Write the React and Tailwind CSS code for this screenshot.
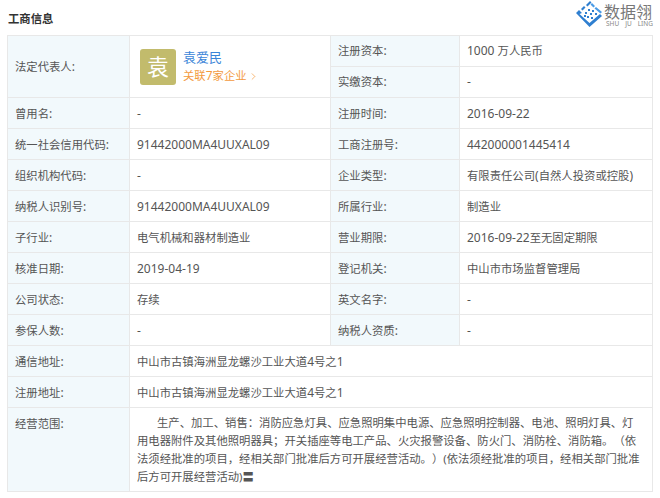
import React from "react";
import { ChevronRight } from "lucide-react";

const rows = [
  ["曾用名:", "-", "注册时间:", "2016-09-22"],
  ["统一社会信用代码:", "91442000MA4UUXAL09", "工商注册号:", "442000001445414"],
  ["组织机构代码:", "-", "企业类型:", "有限责任公司(自然人投资或控股)"],
  ["纳税人识别号:", "91442000MA4UUXAL09", "所属行业:", "制造业"],
  ["子行业:", "电气机械和器材制造业", "营业期限:", "2016-09-22至无固定期限"],
  ["核准日期:", "2019-04-19", "登记机关:", "中山市市场监督管理局"],
  ["公司状态:", "存续", "英文名字:", "-"],
  ["参保人数:", "-", "纳税人资质:", "-"],
];

const label = "bg-[#f2f9fc] border border-[#e8e8e8] pl-[7px] text-left font-normal text-[#555] h-[31px]";
const cell = "bg-white border border-[#e8e8e8] pl-[7px] text-[#555] h-[31px]";

// the chinese glyphs sit a bit narrower than the digits in the picture
const T = ({ children }) =>
  children.split(/([^\x00-\x7f]+)/).map((part, i) =>
    i % 2 ? (
      <span key={i} className="text-[11.35px]">
        {part}
      </span>
    ) : (
      part
    )
  );

const Logo = () => (
  <svg width="27" height="26" viewBox="0 0 27 26" className="shrink-0">
    <path d="M0 12 L3 9 L6 12 L3.5 13 L13.5 22 L24 13 L26 15 L13.5 26 Z" fill="#2f7fd0" />
    <path d="M5 8 L8 5 L9.5 6.5 L6.5 9.5 Z M10 4 L14 0 L15.5 1.5 L11.5 5.5 Z" fill="#2f7fd0" />
    <path d="M16 2 L19 5 L17.5 6.5 L14.5 3.5 Z M20 6 L26 11 L24.5 12.5 L18.5 7.5 Z" fill="#4a9be6" />
    <path d="M9 11 h2 v2 h-2 Z M12 8 h2 v2 h-2 Z M14 12 h2 v2 h-2 Z M11 15 h2 v2 h-2 Z M16 9 h2 v2 h-2 Z M8 14 h2 v2 h-2 Z M15 16 h2 v2 h-2 Z M19 12 h2 v2 h-2 Z" fill="#2f7fd0" />
  </svg>
);

export default function App() {
  return (
    <div className="w-[660px] h-[498px] bg-white overflow-hidden text-[12px] font-['Noto_Sans','Noto_Sans_CJK_SC',sans-serif]">
      <div className="h-[35px] flex justify-between pl-[8px] pr-[7px]">
        <h3 className="pt-[10px] text-[11.35px] leading-[18px] font-semibold text-[#333]">工商信息</h3>
        <div className="flex items-start gap-[1px] pt-[1px]">
          <Logo />
          <div className="w-[49px] pt-[3px]">
            <div className="text-[16px] leading-[16px] text-[#777] whitespace-nowrap">数据翎</div>
            <div className="text-[6.5px] leading-[7px] text-[#888] flex justify-between pl-[2px]"><span>SHU</span><span>JU</span><span>LING</span></div>
          </div>
        </div>
      </div>
      <table className="ml-[7px] w-[645px] table-fixed border-collapse">
        <colgroup>
          <col className="w-[122px]" />
          <col className="w-[201px]" />
          <col className="w-[129px]" />
          <col className="w-[193px]" />
        </colgroup>
        <tbody>
          <tr>
            <th rowSpan={2} className={label}><T>法定代表人:</T></th>
            <td rowSpan={2} className={cell + " pl-[10px]"}>
              <div className="flex items-center gap-[7px]">
                <div className="w-[36px] h-[36px] rounded-[3px] bg-[#c2bb6c] text-white text-[22px] flex items-center justify-center">袁</div>
                <div>
                  <div className="text-[#3b85d8] text-[13px] leading-[19px]">袁爱民</div>
                  <div className="text-[#f39a3e] leading-[18px] flex items-center"><T>关联7家企业</T><ChevronRight size={11} strokeWidth={1.5} className="ml-[1px]" /></div>
                </div>
              </div>
            </td>
            <th className={label}><T>注册资本:</T></th>
            <td className={cell}><T>1000 万人民币</T></td>
          </tr>
          <tr>
            <th className={label}><T>实缴资本:</T></th>
            <td className={cell}>-</td>
          </tr>
          {rows.map((r) => (
            <tr key={r[0]}>
              <th className={label + " pt-[1px]"}><T>{r[0]}</T></th>
              <td className={cell + " pt-[1px]"}><T>{r[1]}</T></td>
              <th className={label + " pt-[1px]"}><T>{r[2]}</T></th>
              <td className={cell + " pt-[1px]"}><T>{r[3]}</T></td>
            </tr>
          ))}
          <tr>
            <th className={label + " pt-[1px]"}><T>通信地址:</T></th>
            <td colSpan={3} className={cell + " pt-[1px]"}><T>中山市古镇海洲显龙螺沙工业大道4号之1</T></td>
          </tr>
          <tr>
            <th className={label + " pt-[1px]"}><T>注册地址:</T></th>
            <td colSpan={3} className={cell + " pt-[1px]"}><T>中山市古镇海洲显龙螺沙工业大道4号之1</T></td>
          </tr>
          <tr>
            <th className={label + " align-top pt-[7px]"}><T>经营范围:</T></th>
            <td colSpan={3} className={cell + " align-top pt-[6px] pb-[5px] pr-[8px] text-[11.35px] leading-[18px] indent-[20px] [text-spacing-trim:space-all]"}>
              生产、加工、销售：消防应急灯具、应急照明集中电源、应急照明控制器、电池、照明灯具、灯用电器附件及其他照明器具；开关插座等电工产品、火灾报警设备、防火门、消防栓、消防箱。（依法须经批准的项目，经相关部门批准后方可开展经营活动。）(依法须经批准的项目，经相关部门批准后方可开展经营活动)〓
            </td>
          </tr>
        </tbody>
      </table>
    </div>
  );
}
